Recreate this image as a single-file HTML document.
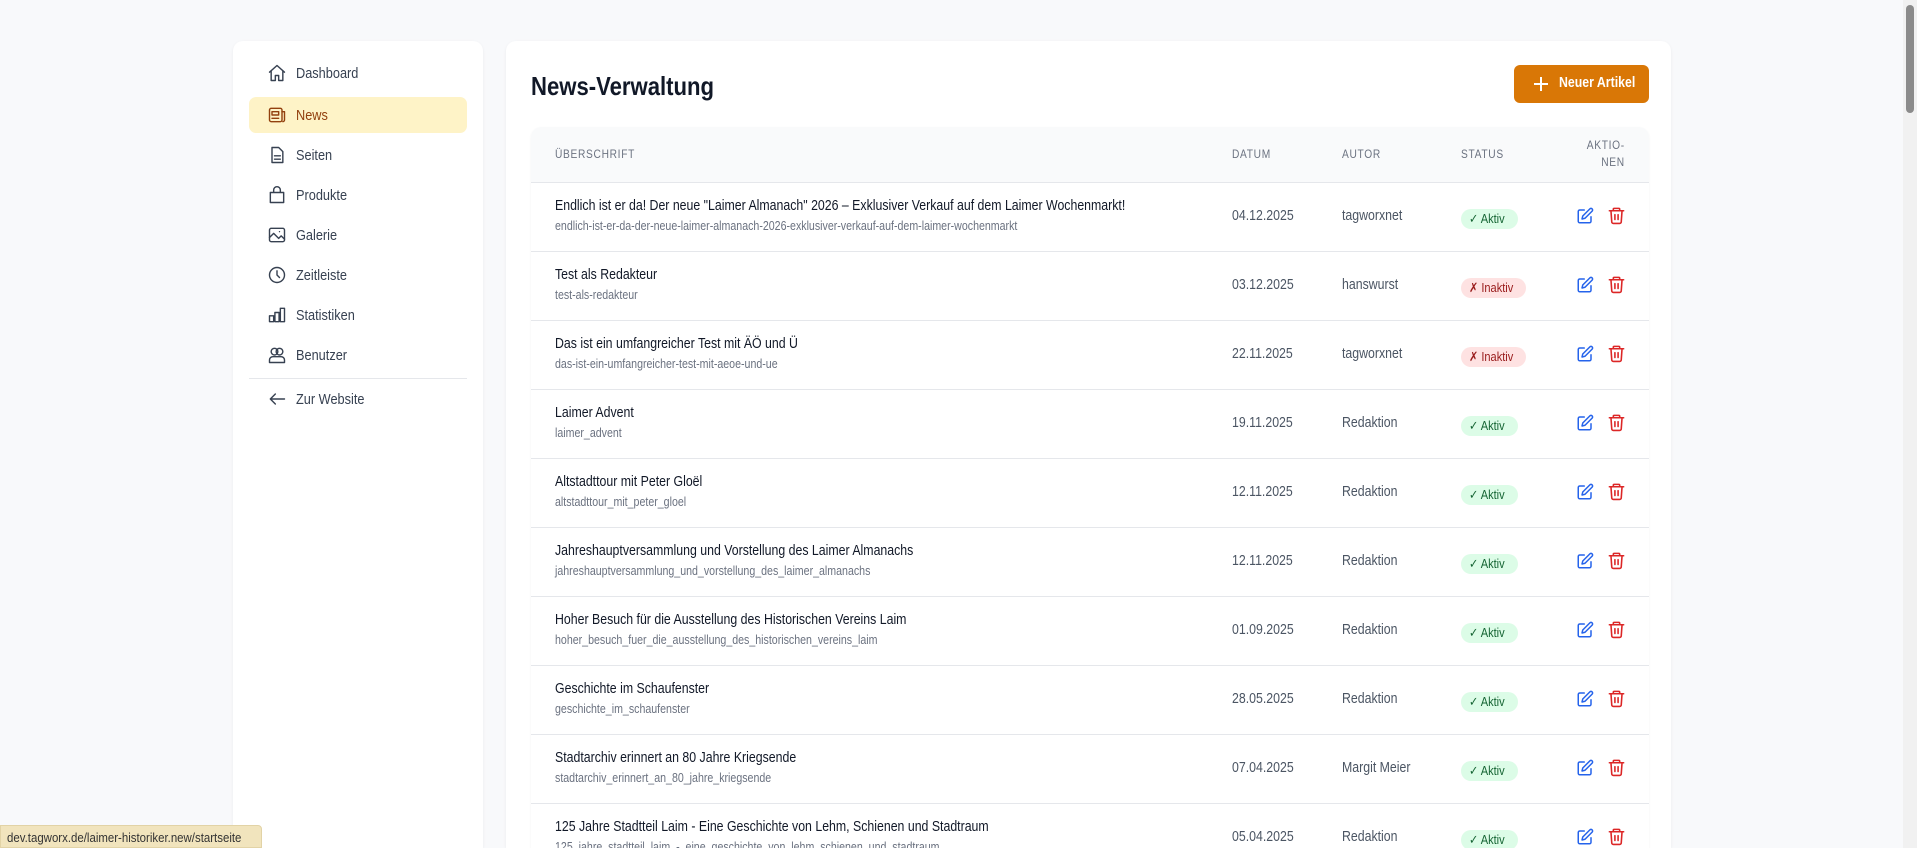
<!DOCTYPE html>
<html style="width:1917px;height:848px;overflow:hidden"><head><meta charset="utf-8"><style>
*{box-sizing:border-box;margin:0;padding:0}
body{width:1917px;height:848px;overflow:hidden;background:#f8f9fb;font-family:"Liberation Sans",sans-serif;color:#111827;position:relative}
.c{display:inline-block;white-space:nowrap;transform:scaleX(.85);transform-origin:left center}
.side{position:absolute;left:233px;top:41px;width:250px;height:807px;background:#fff;border-radius:10px 10px 0 0;box-shadow:0 1px 3px rgba(0,0,0,.06)}
.nav{position:absolute;left:16px;width:218px;height:36px;display:flex;align-items:center;font-size:15px;color:#374151}
.nav svg{position:absolute;left:18px;width:20px;height:20px;fill:none;stroke:#374151;stroke-width:1.7;stroke-linecap:round;stroke-linejoin:round}
.nav span{position:absolute;left:47px}
.nav.act{background:#fef3c7;border-radius:7px;color:#92400e}
.nav.act svg{stroke:#92400e}
.divd{position:absolute;left:16px;width:218px;top:337px;border-top:1px solid #e5e7eb}
.main{position:absolute;left:506px;top:41px;width:1165px;height:807px;background:#fff;border-radius:10px 10px 0 0;box-shadow:0 1px 3px rgba(0,0,0,.06);overflow:hidden}
h1{position:absolute;left:25px;top:30px;font-size:26px;font-weight:bold;color:#111827}
.btn{position:absolute;left:1008px;top:24px;width:135px;height:38px;background:#d97706;border-radius:6px;color:#fff;font-size:14.5px;font-weight:bold}
.btn svg{position:absolute;left:19px;top:11px;width:16px;height:16px;stroke:#fff;stroke-width:2;fill:none}
.btn span{position:absolute;left:45px;top:10px}
.tbl{position:absolute;left:25px;top:86px;width:1118px;height:800px;border-radius:10px;overflow:hidden;background:#fff;box-shadow:0 1px 2px rgba(0,0,0,.05)}
.th{position:absolute;left:0;top:0;width:100%;height:56px;background:#f9fafb;border-bottom:1px solid #e5e7eb;font-size:12px;color:#6b7280;letter-spacing:.8px}
.th>div{position:absolute;top:20px}
.row{position:absolute;left:0;width:100%;height:69px;border-bottom:1px solid #e5e7eb;font-size:14.5px}
.t{position:absolute;left:24px;top:15px;color:#111827}
.s{position:absolute;left:24px;top:36px;font-size:12.5px;color:#6b7280}
.d{position:absolute;left:701px;top:25px;color:#4b5563}
.a{position:absolute;left:811px;top:25px;color:#4b5563}
.b{position:absolute;left:930px;top:26px;height:20px;border-radius:10px;font-size:13px;padding:2px 0 0 8px}
.on{background:#dcfce7;color:#166534;width:57px}
.off{background:#fee2e2;color:#991b1b;width:65px}
.e{position:absolute;left:1045px;top:24px;width:18px;height:18px;fill:none;stroke:#2563eb;stroke-width:2;stroke-linecap:round;stroke-linejoin:round}
.x{position:absolute;left:1076px;top:23px;width:19px;height:19px;fill:none;stroke:#dc2626;stroke-width:2;stroke-linecap:round;stroke-linejoin:round}
.status{position:absolute;left:0;top:825px;width:262px;height:23px;background:#f1e4bd;border:1px solid #e2d3a6;border-radius:0 4px 0 0;font-size:13px;color:#333;padding:4px 0 0 6px;white-space:nowrap;overflow:hidden}
.sb{position:absolute;left:1903px;top:0;width:14px;height:848px;background:#f1f1f1}
.sb div{position:absolute;left:3px;top:5px;width:8px;height:108px;background:#8b8b8b;border-radius:4px}
</style></head><body>
<div class="side">
 <div class="nav" style="top:14px"><svg viewBox="0 0 24 24"><path d="M3 11l9-8 9 8M5 9.5V21h5v-6h4v6h5V9.5"/></svg><span class="c">Dashboard</span></div>
 <div class="nav act" style="top:56px"><svg viewBox="0 0 24 24"><rect x="3" y="4" width="15" height="16" rx="2"/><path d="M18 8h3v10a2 2 0 0 1-2 2M6 8h8v4H6zM6 16h8"/></svg><span class="c">News</span></div>
 <div class="nav" style="top:96px"><svg viewBox="0 0 24 24"><path d="M6 3h8l5 5v13H6zM9 13h7M9 17h7"/></svg><span class="c">Seiten</span></div>
 <div class="nav" style="top:136px"><svg viewBox="0 0 24 24"><path d="M4 9h16v12H4zM8 9V6a4 4 0 0 1 8 0v3"/></svg><span class="c">Produkte</span></div>
 <div class="nav" style="top:176px"><svg viewBox="0 0 24 24"><rect x="3" y="4" width="18" height="16" rx="2"/><path d="M3 15l5-5 6 6 3-3 4 4M15 8h.01"/></svg><span class="c">Galerie</span></div>
 <div class="nav" style="top:216px"><svg viewBox="0 0 24 24"><circle cx="12" cy="12" r="9"/><path d="M12 7v5l3 3"/></svg><span class="c">Zeitleiste</span></div>
 <div class="nav" style="top:256px"><svg viewBox="0 0 24 24"><path d="M3 20v-7h5v7zM9.5 20V9h5v11zM16 20V4h5v16z"/></svg><span class="c">Statistiken</span></div>
 <div class="nav" style="top:296px"><svg viewBox="0 0 24 24"><circle cx="9" cy="8" r="4"/><circle cx="15" cy="8" r="4"/><path d="M3 21v-3a4 4 0 0 1 4-4h10a4 4 0 0 1 4 4v3z"/></svg><span class="c">Benutzer</span></div>
 <div class="divd"></div>
 <div class="nav" style="top:340px"><svg viewBox="0 0 24 24"><path d="M21 12H4M10 6l-6 6 6 6"/></svg><span class="c">Zur Website</span></div>
</div>
<div class="main">
 <h1><span class="c">News-Verwaltung</span></h1>
 <div class="btn"><svg viewBox="0 0 16 16"><path d="M8 1v14M1 8h14"/></svg><span class="c">Neuer Artikel</span></div>
 <div class="tbl">
  <div class="th"><div style="left:24px"><span class="c">ÜBERSCHRIFT</span></div><div style="left:701px"><span class="c">DATUM</span></div><div style="left:811px"><span class="c">AUTOR</span></div><div style="left:930px"><span class="c">STATUS</span></div><div style="left:1040px;top:10px;text-align:right;line-height:17px;width:54px"><span class="c" style="transform-origin:right center">AKTIO-<br>NEN</span></div></div>
  <div id="rows"></div>
 </div>
</div>
<div class="status"><span class="c" style="transform:scaleX(.88)">dev.tagworx.de/laimer-historiker.new/startseite</span></div>
<div class="sb"><div></div></div>
<script>
var R=[["Endlich ist er da! Der neue \"Laimer Almanach\" 2026 – Exklusiver Verkauf auf dem Laimer Wochenmarkt!","endlich-ist-er-da-der-neue-laimer-almanach-2026-exklusiver-verkauf-auf-dem-laimer-wochenmarkt","04.12.2025","tagworxnet",1],
["Test als Redakteur","test-als-redakteur","03.12.2025","hanswurst",0],
["Das ist ein umfangreicher Test mit ÄÖ und Ü","das-ist-ein-umfangreicher-test-mit-aeoe-und-ue","22.11.2025","tagworxnet",0],
["Laimer Advent","laimer_advent","19.11.2025","Redaktion",1],
["Altstadttour mit Peter Gloël","altstadttour_mit_peter_gloel","12.11.2025","Redaktion",1],
["Jahreshauptversammlung und Vorstellung des Laimer Almanachs","jahreshauptversammlung_und_vorstellung_des_laimer_almanachs","12.11.2025","Redaktion",1],
["Hoher Besuch für die Ausstellung des Historischen Vereins Laim","hoher_besuch_fuer_die_ausstellung_des_historischen_vereins_laim","01.09.2025","Redaktion",1],
["Geschichte im Schaufenster","geschichte_im_schaufenster","28.05.2025","Redaktion",1],
["Stadtarchiv erinnert an 80 Jahre Kriegsende","stadtarchiv_erinnert_an_80_jahre_kriegsende","07.04.2025","Margit Meier",1],
["125 Jahre Stadtteil Laim - Eine Geschichte von Lehm, Schienen und Stadtraum","125_jahre_stadtteil_laim_-_eine_geschichte_von_lehm_schienen_und_stadtraum","05.04.2025","Redaktion",1]];
var h="";R.forEach(function(r,i){h+='<div class="row" style="top:'+(56+69*i)+'px"><div class="t"><span class="c"></span></div><div class="s"><span class="c"></span></div><div class="d"><span class="c">'+r[2]+'</span></div><div class="a"><span class="c">'+r[3]+'</span></div>'+(r[4]?'<div class="b on"><span class="c">✓ Aktiv</span></div>':'<div class="b off"><span class="c">✗ Inaktiv</span></div>')+'<svg class="e" viewBox="0 0 24 24"><path d="M11 4H5a2 2 0 0 0-2 2v13a2 2 0 0 0 2 2h13a2 2 0 0 0 2-2v-6"/><path d="M18.5 2.5a2.1 2.1 0 0 1 3 3L12 15l-4 1 1-4z"/></svg><svg class="x" viewBox="0 0 24 24"><path d="M3 6h18M8 6V4a1 1 0 0 1 1-1h6a1 1 0 0 1 1 1v2M5 6l1 14a2 2 0 0 0 2 2h8a2 2 0 0 0 2-2l1-14M10 11v6M14 11v6"/></svg></div>';});
document.getElementById("rows").innerHTML=h;
document.querySelectorAll(".row").forEach(function(e,i){e.querySelector(".t span").textContent=R[i][0];e.querySelector(".s span").textContent=R[i][1];});
</script>
</body></html>
